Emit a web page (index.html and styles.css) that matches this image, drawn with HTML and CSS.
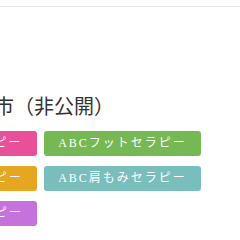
FILE: index.html
```html
<!DOCTYPE html>
<html lang="ja">
<head>
<meta charset="utf-8">
<link rel="stylesheet" href="styles.css">
</head>
<body>
<header class="topbar"></header>
<main class="content">
  <h2 class="area-title">エリア：大阪市（非公開）</h2>
  <div class="menu-grid">
    <span class="menu-btn pink">ABCボディセラピー</span>
    <span class="menu-btn green">ABCフットセラピー</span>
    <span class="menu-btn orange">ABCヘッドセラピー</span>
    <span class="menu-btn teal">ABC肩もみセラピー</span>
    <span class="menu-btn purple">ABCハンドセラピー</span>
  </div>
</main>
</body>
</html>
```
FILE: styles.css
```css
html, body {
  margin: 0;
  padding: 0;
  background: #ffffff;
}
.topbar {
  height: 6px;
  border-bottom: 1px solid #e6e6e6;
}
.content {
  margin-left: -120px;
  padding-top: 84px;
}
.area-title {
  margin: 0 0 0 -6px;
  font-family: "Noto Sans CJK JP", sans-serif;
  font-weight: 400;
  font-size: 20px;
  line-height: 30px;
  color: #333333;
}
.menu-grid {
  display: grid;
  grid-template-columns: 157px 157px;
  gap: 10px 7px;
  margin-top: 10px;
}
.menu-btn {
  display: block;
  height: 25px;
  line-height: 25px;
  border-radius: 3px;
  text-align: center;
  color: #ffffff;
  font-family: "Liberation Serif", "Noto Sans CJK JP", serif;
  font-size: 12px;
  letter-spacing: 2px;
}
.pink { background: #e8509a; }
.green { background: #75b854; }
.orange { background: #e5a622; }
.teal { background: #79bebd; }
.purple { background: #c672dd; }
```
